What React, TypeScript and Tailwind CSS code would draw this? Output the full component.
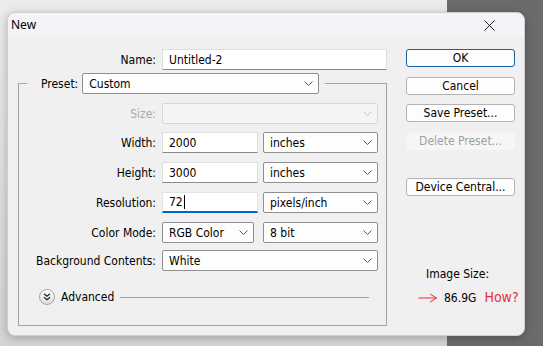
import type { ReactNode } from "react";

const FONT = "[font-family:'DejaVu_Sans_Condensed','Liberation_Sans',sans-serif]";

function Chevron({ disabled = false }: { disabled?: boolean }) {
  return (
    <svg width="9" height="5" viewBox="0 0 9 5" className="shrink-0" aria-hidden>
      <path
        d="M0.5 0.5 L4.5 4.5 L8.5 0.5"
        fill="none"
        stroke={disabled ? "#c4c4c4" : "#555"}
        strokeWidth="1"
      />
    </svg>
  );
}

function Select({ value, width, disabled = false }: { value?: string; width: string; disabled?: boolean }) {
  return (
    <div
      className={`${width} flex h-[21px] shrink-0 items-center justify-between rounded-[2px] border pl-[6px] pr-[5px] ${
        disabled ? "border-[#d6d6d6] bg-[#f4f4f4]" : "border-[#8f8f8f] bg-[#fdfdfd]"
      }`}
    >
      <span className="text-[12px] leading-none text-black">{value}</span>
      <Chevron disabled={disabled} />
    </div>
  );
}

function TextBox({ value, width, focused = false }: { value: string; width: string; focused?: boolean }) {
  return (
    <div
      className={`${width} flex h-[21px] shrink-0 items-center bg-white pl-[6px] ${
        focused
          ? "border border-[#e2e2e2] border-b-2 border-b-[#0067c0]"
          : "border border-[#dedede] border-b-[#8a8a8a]"
      }`}
    >
      <span className="text-[12px] leading-none text-black">{value}</span>
      {focused && <span className="ml-px h-[14px] w-px bg-black" />}
    </div>
  );
}

function Row({ label, dim = false, children, className = "" }: { label: string; dim?: boolean; children: ReactNode; className?: string }) {
  return (
    <div className={`flex items-center gap-[6px] ${className}`}>
      <span className={`w-[129px] shrink-0 text-right text-[12px] ${dim ? "text-[#a8a8a8]" : "text-black"}`}>{label}</span>
      {children}
    </div>
  );
}

function Button({ label, primary = false, disabled = false, className = "" }: { label: string; primary?: boolean; disabled?: boolean; className?: string }) {
  const look = primary
    ? "border-[#1a5f9f] bg-[#fdfdfd] text-black"
    : disabled
      ? "border-[#f5f5f5] bg-[#f6f6f6] text-[#a0a0a0]"
      : "border-[#b3b3b3] bg-[#fdfdfd] text-black";
  return (
    <div className={`flex h-[18px] w-[109px] items-center justify-center rounded-[3px] border text-[12px] ${look} ${className}`}>
      {label}
    </div>
  );
}

export default function App() {
  return (
    <div className={`relative flex h-[346px] w-[543px] overflow-hidden bg-[#e6e6e6] ${FONT}`}>
      <div className="flex-1 bg-gradient-to-b from-[#ececec] to-[#d4d4d4]" />
      <div className="w-[96px] bg-[#6b6b6b]" />

      {/* dialog window */}
      <div className="absolute left-[7px] top-[12px] flex h-[324px] w-[518px] flex-col overflow-hidden rounded-[8px] border border-[#cfcfcf] bg-[#f0f0f0] shadow-[0_2px_10px_rgba(0,0,0,0.25)]">
        <div className="flex h-[24px] items-center justify-between bg-[#f3f3f8] pl-[3px] pr-[29px]">
          <span className="text-[12px] text-black [font-family:'Noto_Sans','Open_Sans',sans-serif]">New</span>
          <svg width="11" height="11" viewBox="0 0 11 11" aria-hidden>
            <path d="M0.5 0.5 L10.5 10.5 M10.5 0.5 L0.5 10.5" stroke="#222" strokeWidth="1" />
          </svg>
        </div>

        <div className="flex flex-1 pl-[10px] pt-[12px]">
          {/* form */}
          <div className="flex w-[369px] flex-col">
            <div className="flex items-center gap-[6px]">
              <span className="w-[138px] shrink-0 text-right text-[12px] text-black">Name:</span>
              <TextBox value="Untitled-2" width="w-[225px]" />
            </div>

            <fieldset className="mt-[3px] h-[253px] border border-[#a3a3a3] pl-[8px]">
              <legend className="flex items-center gap-[4px] pl-[14px] pr-[6px]">
                <span className="text-[12px] text-black">Preset:</span>
                <Select value="Custom" width="w-[237px]" />
              </legend>

              <Row label="Size:" dim className="mt-[9px]">
                <Select width="w-[216px]" disabled />
              </Row>
              <Row label="Width:" className="mt-[8px]">
                <TextBox value="2000" width="w-[96px]" />
                <div className="-ml-px">
                  <Select value="inches" width="w-[115px]" />
                </div>
              </Row>
              <Row label="Height:" className="mt-[9px]">
                <TextBox value="3000" width="w-[96px]" />
                <div className="-ml-px">
                  <Select value="inches" width="w-[115px]" />
                </div>
              </Row>
              <Row label="Resolution:" className="mt-[9px]">
                <TextBox value="72" width="w-[96px]" focused />
                <div className="-ml-px">
                  <Select value="pixels/inch" width="w-[115px]" />
                </div>
              </Row>
              <Row label="Color Mode:" className="mt-[9px]">
                <Select value="RGB Color" width="w-[92px]" />
                <div className="ml-[3px]">
                  <Select value="8 bit" width="w-[115px]" />
                </div>
              </Row>
              <Row label="Background Contents:" className="mt-[7px]">
                <Select value="White" width="w-[216px]" />
              </Row>

              <div className="mt-[17px] flex items-center pl-[12px]">
                <div className="flex h-[16px] w-[16px] items-center justify-center rounded-full border border-[#a6a6a6] bg-gradient-to-b from-white to-[#dcdcdc]">
                  <svg width="8" height="8" viewBox="0 0 8 8" aria-hidden>
                    <path d="M1 0.8 L4 3.3 L7 0.8 M1 4.3 L4 6.8 L7 4.3" fill="none" stroke="#222" strokeWidth="1.2" />
                  </svg>
                </div>
                <span className="ml-[6px] text-[12px] text-black">Advanced</span>
                <div className="ml-[6px] h-px w-[249px] bg-[#a0a0a0]" />
              </div>
            </fieldset>
          </div>

          {/* buttons and info */}
          <div className="ml-[19px] flex flex-col">
            <Button label="OK" primary />
            <Button label="Cancel" className="mt-[10px]" />
            <Button label="Save Preset..." className="mt-[9px]" />
            <Button label="Delete Preset..." disabled className="mt-[10px]" />
            <Button label="Device Central..." className="mt-[28px]" />

            <span className="mt-[69px] pl-[20px] text-[12px] text-black">Image Size:</span>
            <div className="mt-[4px] flex items-center">
              <svg width="20" height="10" viewBox="0 0 20 10" className="ml-[12px]" aria-hidden>
                <path d="M0.5 5 L18.5 5 M12 1 L18.5 5 L12 9" fill="none" stroke="#e0303a" strokeWidth="1" />
              </svg>
              <span className="ml-[6px] text-[12px] text-black">86.9G</span>
              <span className="ml-[8px] text-[14px] text-[#e0303a]">How?</span>
            </div>
          </div>
        </div>
      </div>
    </div>
  );
}
